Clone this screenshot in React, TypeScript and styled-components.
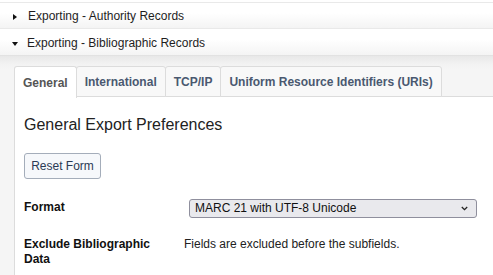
import React from "react";
import styled, { createGlobalStyle } from "styled-components";

const Global = createGlobalStyle`
  html, body { margin: 0; padding: 0; background: #fff; }
  body { font-family: "Liberation Sans", Arial, sans-serif; color: #222; }
  * { box-sizing: border-box; }
`;

const Page = styled.div`
  width: 493px;
  height: 275px;
  overflow: hidden;
  padding-top: 2px;
  background: #fff;
`;

const Header = styled.div<{ $last?: boolean }>`
  display: flex;
  align-items: center;
  height: ${(p) => (p.$last ? 28 : 27)}px;
  padding-left: 12px;
  padding-top: ${(p) => (p.$last ? 1 : 0)}px;
  border-top: 1px solid #e9e9e9;
  border-bottom: 1px solid ${(p) => (p.$last ? "#e2e2e2" : "#d9d9d9")};
  background: linear-gradient(#ffffff 0%, #ffffff 40%, #f4f4f4 100%);
  font-size: 12px;
  color: #1e1e1e;
  margin-top: ${(p) => (p.$last ? -1 : 0)}px;
`;

const Arrow = styled.span<{ $open?: boolean }>`
  display: inline-block;
  width: 0;
  height: 0;
  margin-right: ${(p) => (p.$open ? 9 : 11)}px;
  ${(p) =>
    p.$open
      ? `border-left: 3.5px solid transparent; border-right: 3.5px solid transparent; border-top: 4px solid #111; margin-left: 0px; margin-top: 2px;`
      : `border-top: 3px solid transparent; border-bottom: 3px solid transparent; border-left: 4px solid #111; margin-left: 1px; margin-top: 2px;`}
`;

const Panel = styled.div`
  background: linear-gradient(#e8e8e8 0px, #f2f2f2 8px, #f5f5f5 14px);
  padding: 10px 0 0 14px;
  height: 230px;
`;

const TabList = styled.div`
  display: flex;
  height: 31px;
`;

const Tab = styled.div<{ $active?: boolean }>`
  display: flex;
  align-items: center;
  padding: 0 8px;
  height: ${(p) => (p.$active ? 32 : 31)}px;
  margin-right: -1px;
  border: 1px solid #dcdcdc;
  border-bottom: ${(p) => (p.$active ? "none" : "1px solid #dcdcdc")};
  border-radius: 3px 3px 0 0;
  background: ${(p) => (p.$active ? "#fff" : "#f8f8f8")};
  color: ${(p) => (p.$active ? "#555" : "#4a5870")};
  font-weight: bold;
  font-size: 12px;
  position: relative;
  z-index: ${(p) => (p.$active ? 1 : 0)};
`;

const Content = styled.div`
  background: #fff;
  border-left: 1px solid #dcdcdc;
  border-top: 1px solid #dcdcdc;
  padding: 18px 9px;
  height: 200px;
  margin-top: -1px;
`;

const Heading = styled.h2`
  margin: 0;
  font-size: 16px;
  font-weight: normal;
  line-height: 19px;
  color: #222;
`;

const ResetButton = styled.button`
  margin-top: 19px;
  height: 26px;
  width: 77px;
  padding: 0;
  font-family: "Liberation Sans", Arial, sans-serif;
  font-size: 12px;
  color: #2b3a55;
  background: #f6f8fb;
  border: 1px solid #a4adba;
  border-radius: 3px;
`;

const Form = styled.div`
  display: grid;
  grid-template-columns: 150px 1fr;
  column-gap: 10px;
  row-gap: 18px;
  margin-top: 20px;
  align-items: start;
`;

const Label = styled.div`
  font-weight: bold;
  font-size: 12px;
  line-height: 15px;
  color: #111;
  padding-top: 1px;
`;

const Value = styled.div`
  font-size: 12px;
  line-height: 15px;
  color: #222;
  padding-top: 1px;
`;

const SelectWrap = styled.div`
  position: relative;
  margin-left: 5px;
  width: 288px;
  height: 19px;
`;

const Select = styled.select`
  appearance: none;
  -webkit-appearance: none;
  display: block;
  width: 100%;
  height: 19px;
  font-family: "Liberation Sans", Arial, sans-serif;
  font-size: 12px;
  line-height: 17px;
  color: #111;
  padding: 0 20px 0 5px;
  border: 1px solid #8f8f9d;
  border-radius: 3px;
  background-color: #e9e9ed;
  outline: none;
`;

const Chevron = styled.svg`
  position: absolute;
  right: 9px;
  top: 7px;
  width: 7px;
  height: 5px;
  pointer-events: none;
`;

export default function App() {
  return (
    <>
      <Global />
      <Page>
        <Header>
          <Arrow />
          Exporting - Authority Records
        </Header>
        <Header $last>
          <Arrow $open />
          Exporting - Bibliographic Records
        </Header>
        <Panel>
          <TabList>
            <Tab $active>General</Tab>
            <Tab>International</Tab>
            <Tab>TCP/IP</Tab>
            <Tab>Uniform Resource Identifiers (URIs)</Tab>
          </TabList>
          <Content>
            <Heading>General Export Preferences</Heading>
            <ResetButton>Reset Form</ResetButton>
            <Form>
              <Label>Format</Label>
              <SelectWrap>
                <Select defaultValue="marc21">
                  <option value="marc21">MARC 21 with UTF-8 Unicode</option>
                </Select>
                <Chevron viewBox="0 0 7 5">
                  <path d="M0.8 1 L3.5 3.7 L6.2 1" fill="none" stroke="#222" strokeWidth="1.3" />
                </Chevron>
              </SelectWrap>
              <Label>Exclude Bibliographic Data</Label>
              <Value>Fields are excluded before the subfields.</Value>
            </Form>
          </Content>
        </Panel>
      </Page>
    </>
  );
}
